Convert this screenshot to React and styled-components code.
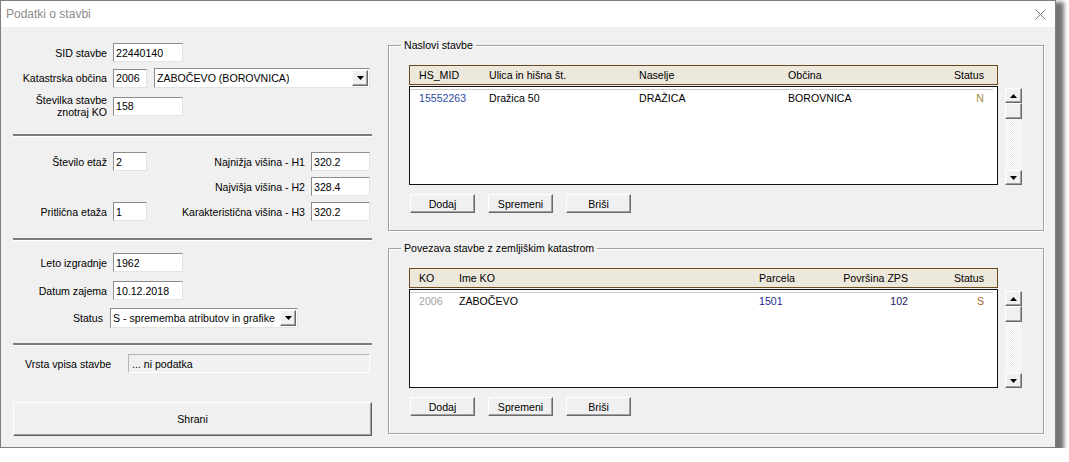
import React from "react";
import styled, { createGlobalStyle } from "styled-components";

const GlobalStyle = createGlobalStyle`
  * { box-sizing: border-box; }
  body {
    margin: 0;
    background: #fff;
    font-family: "Liberation Sans", Arial, sans-serif;
    font-size: 10.6px;
    color: #000;
  }
`;

const addressCols = "70px 150px 149px 120px 1fr";
const parcelCols = "40px 300px 60px 89px 1fr";

function Arrow({ up }) {
  return (
    <svg width="7" height="4" viewBox="0 0 7 4">
      <path d={up ? "M0 4 L7 4 L3.5 0 Z" : "M0 0 L7 0 L3.5 4 Z"} fill="#000" />
    </svg>
  );
}

function Combo({ w, value }) {
  return (
    <ComboBox $w={w}>
      <ComboText>{value}</ComboText>
      <DropButton>
        <Arrow />
      </DropButton>
    </ComboBox>
  );
}

function Scroll() {
  return (
    <ScrollBar>
      <ScrollButton><Arrow up /></ScrollButton>
      <ScrollThumb />
      <ScrollTrack />
      <ScrollButton><Arrow /></ScrollButton>
    </ScrollBar>
  );
}

function App() {
  return (
    <>
      <GlobalStyle />
      <Window>
        <TitleBar>
          <Title>Podatki o stavbi</Title>
          <svg width="11" height="11" viewBox="0 0 11 11">
            <path d="M0.5 0.5 L10.5 10.5 M10.5 0.5 L0.5 10.5" stroke="#7a7a7a" strokeWidth="1" />
          </svg>
        </TitleBar>
        <Body>
          <LeftColumn>
            <FieldRow>
              <Label>SID stavbe</Label>
              <TextBox $w={70} readOnly value="22440140" />
            </FieldRow>
            <FieldRow $mt={6}>
              <Label>Katastrska občina</Label>
              <Inline>
                <TextBox $w={34} readOnly value="2006" />
                <Combo w={216} value="ZABOČEVO (BOROVNICA)" />
              </Inline>
            </FieldRow>
            <FieldRow $mt={6}>
              <Label>Številka stavbe<br />znotraj KO</Label>
              <TextBox $w={70} readOnly value="158" />
            </FieldRow>
            <Separator $mt={16} />

            <HeightsGrid>
              <Label>Število etaž</Label>
              <TextBox readOnly value="2" />
              <Label>Najnižja višina - H1</Label>
              <TextBox readOnly value="320.2" />
              <Label $col={3}>Najvišja višina - H2</Label>
              <TextBox readOnly value="328.4" />
              <Label>Pritlična etaža</Label>
              <TextBox readOnly value="1" />
              <Label>Karakteristična višina - H3</Label>
              <TextBox readOnly value="320.2" />
            </HeightsGrid>
            <Separator $mt={17} />

            <FieldRow $mt={12}>
              <Label>Leto izgradnje</Label>
              <TextBox $w={70} readOnly value="1962" />
            </FieldRow>
            <FieldRow $mt={9}>
              <Label>Datum zajema</Label>
              <TextBox $w={70} readOnly value="10.12.2018" />
            </FieldRow>
            <FieldRow $mt={8}>
              <Label $pr={4}>Status</Label>
              <ShiftLeft>
                <Combo w={188} value="S - sprememba atributov in grafike" />
              </ShiftLeft>
            </FieldRow>
            <Separator $mt={15} />

            <InfoRow>
              <InfoLabel>Vrsta vpisa stavbe</InfoLabel>
              <ReadOnlyBox>... ni podatka</ReadOnlyBox>
            </InfoRow>
            <SaveButton>Shrani</SaveButton>
          </LeftColumn>

          <RightColumn>
            <GroupBox>
              <Legend>Naslovi stavbe</Legend>
              <ListHeader $cols={addressCols}>
                <span>HS_MID</span>
                <span>Ulica in hišna št.</span>
                <span>Naselje</span>
                <span>Občina</span>
                <Cell $align="right">Status</Cell>
              </ListHeader>
              <ListArea>
                <ListBody>
                  <GridLine />
                  <ListRow $cols={addressCols}>
                    <Cell $color="#2a4ba3">15552263</Cell>
                    <Cell>Dražica 50</Cell>
                    <Cell>DRAŽICA</Cell>
                    <Cell>BOROVNICA</Cell>
                    <Cell $align="right" $color="#a8893d">N</Cell>
                  </ListRow>
                </ListBody>
                <Scroll />
              </ListArea>
              <ButtonRow>
                <SmallButton>Dodaj</SmallButton>
                <SmallButton>Spremeni</SmallButton>
                <SmallButton>Briši</SmallButton>
              </ButtonRow>
            </GroupBox>

            <GroupBox $mt={11}>
              <Legend>Povezava stavbe z zemljiškim katastrom</Legend>
              <ListHeader $cols={parcelCols}>
                <span>KO</span>
                <span>Ime KO</span>
                <span>Parcela</span>
                <Cell $align="right">Površina ZPS</Cell>
                <Cell $align="right">Status</Cell>
              </ListHeader>
              <ListArea>
                <ListBody>
                  <GridLine />
                  <ListRow $cols={parcelCols}>
                    <Cell $color="#a3a3a3">2006</Cell>
                    <Cell>ZABOČEVO</Cell>
                    <Cell $color="#1f2c92">1501</Cell>
                    <Cell $align="right" $color="#1b1b5e">102</Cell>
                    <Cell $align="right" $color="#a4622a">S</Cell>
                  </ListRow>
                </ListBody>
                <Scroll />
              </ListArea>
              <ButtonRow>
                <SmallButton>Dodaj</SmallButton>
                <SmallButton>Spremeni</SmallButton>
                <SmallButton>Briši</SmallButton>
              </ButtonRow>
            </GroupBox>
          </RightColumn>
        </Body>
      </Window>
    </>
  );
}

export default App;

const Window = styled.div`
  width: 1056px;
  height: 448px;
  border: 1px solid #7e7e7e;
  background: #f0f0f0;
  display: flex;
  flex-direction: column;
  box-shadow: 5px 5px 4px 3px rgba(0, 0, 0, 0.55);
`;

const TitleBar = styled.div`
  height: 26px;
  flex: none;
  background: #fff;
  display: flex;
  align-items: center;
  justify-content: space-between;
  padding: 0 9px 0 5px;
`;

const Title = styled.div`
  font-size: 12px;
  color: #8c8c8c;
`;

const Body = styled.div`
  flex: 1;
  display: grid;
  grid-template-columns: 359px 656px;
  column-gap: 16px;
  padding-left: 12px;
  align-items: start;
`;

const LeftColumn = styled.div`
  display: flex;
  flex-direction: column;
  padding-top: 16px;
`;

const RightColumn = styled.div`
  display: flex;
  flex-direction: column;
  padding-top: 12px;
`;

const FieldRow = styled.div`
  display: grid;
  grid-template-columns: 94px auto;
  column-gap: 6px;
  align-items: center;
  justify-items: start;
  margin-top: ${p => p.$mt || 0}px;
`;

const Label = styled.div`
  justify-self: end;
  text-align: right;
  white-space: nowrap;
  line-height: 12px;
  padding-right: ${p => p.$pr || 0}px;
  grid-column: ${p => p.$col || "auto"};
`;

const Inline = styled.div`
  display: flex;
  gap: 7px;
  align-items: center;
`;

const ShiftLeft = styled.div`
  margin-left: -3px;
`;

const TextBox = styled.input`
  width: ${p => (p.$w ? `${p.$w}px` : "100%")};
  height: 19px;
  margin: 0;
  padding: 0 2px;
  font: inherit;
  color: #000;
  background: #fff;
  border: 1px solid;
  border-color: #8c8c8c #e3e3e3 #e3e3e3 #8c8c8c;
  outline: none;
`;

const ComboBox = styled.div`
  width: ${p => p.$w}px;
  height: 20px;
  background: #fff;
  border: 1px solid;
  border-color: #8c8c8c #e3e3e3 #e3e3e3 #8c8c8c;
  display: flex;
  align-items: center;
  justify-content: space-between;
  padding: 0 1px 0 2px;
`;

const ComboText = styled.span`
  white-space: nowrap;
  overflow: hidden;
`;

const DropButton = styled.div`
  width: 16px;
  height: 16px;
  flex: none;
  background: #f0f0f0;
  border: 1px solid;
  border-color: #fff #6a6a6a #6a6a6a #fff;
  box-shadow: inset -1px -1px 0 #a0a0a0;
  display: flex;
  align-items: center;
  justify-content: center;
`;

const Separator = styled.div`
  height: 3px;
  flex: none;
  background: #7c7c7c;
  border-bottom: 1px solid #fff;
  margin-top: ${p => p.$mt || 0}px;
`;

const HeightsGrid = styled.div`
  display: grid;
  grid-template-columns: 94px 34px 1fr 59px;
  grid-auto-rows: 19px;
  column-gap: 6px;
  row-gap: 6px;
  align-items: center;
  width: 357px;
  margin-top: 15px;
`;

const InfoRow = styled.div`
  display: flex;
  align-items: center;
  justify-content: space-between;
  margin-top: 8px;
  padding-left: 12px;
  width: 357px;
`;

const InfoLabel = styled.div`
  white-space: nowrap;
`;

const ReadOnlyBox = styled.div`
  width: 242px;
  height: 19px;
  display: flex;
  align-items: center;
  padding-left: 3px;
  background: #f0f0f0;
  border: 1px solid;
  border-color: #b4b4b4 #fff #fff #b4b4b4;
`;

const SaveButton = styled.button`
  margin-top: 29px;
  width: 359px;
  height: 34px;
  font: inherit;
  color: #000;
  background: #f0f0f0;
  border: 1px solid;
  border-color: #fff #5f5f5f #5f5f5f #fff;
  box-shadow: inset -1px -1px 0 #a0a0a0;
  padding: 0;
`;

const GroupBox = styled.fieldset`
  margin: ${p => p.$mt || 0}px 0 0 0;
  width: 656px;
  min-width: 0;
  border: 1px solid #a0a0a0;
  box-shadow: 1px 1px 0 #fff, inset 1px 1px 0 #fff;
  padding: 13px 21px 17px 20px;
`;

const Legend = styled.legend`
  margin-left: -8px;
  padding: 0 3px;
  line-height: 13px;
`;

const ListHeader = styled.div`
  display: grid;
  grid-template-columns: ${p => p.$cols};
  align-items: center;
  width: 589px;
  height: 20px;
  background: #ede8dc;
  border: 1px solid #6c4a20;
  padding: 0 13px 0 9px;
  white-space: nowrap;
`;

const ListArea = styled.div`
  display: flex;
  gap: 7px;
  margin-top: 1px;
`;

const ListBody = styled.div`
  width: 589px;
  height: 99px;
  background: #fff;
  border: 1px solid #111;
  padding-top: 2px;
`;

const GridLine = styled.div`
  height: 1px;
  margin-right: 4px;
  background: #cdcdcd;
`;

const ListRow = styled.div`
  display: grid;
  grid-template-columns: ${p => p.$cols};
  align-items: center;
  height: 16px;
  padding: 0 13px 0 9px;
  white-space: nowrap;
`;

const Cell = styled.span`
  text-align: ${p => p.$align || "left"};
  color: ${p => p.$color || "#000"};
`;

const ScrollBar = styled.div`
  width: 17px;
  height: 97px;
  margin-top: 2px;
  display: flex;
  flex-direction: column;
`;

const ScrollButton = styled.div`
  height: 15px;
  flex: none;
  background: #f0f0f0;
  border: 1px solid;
  border-color: #fff #6a6a6a #6a6a6a #fff;
  box-shadow: inset -1px -1px 0 #a0a0a0;
  display: flex;
  align-items: center;
  justify-content: center;
`;

const ScrollThumb = styled.div`
  height: 16px;
  flex: none;
  background: #f0f0f0;
  border: 1px solid;
  border-color: #fff #6a6a6a #6a6a6a #fff;
  box-shadow: inset -1px -1px 0 #a0a0a0;
`;

const ScrollTrack = styled.div`
  flex: 1;
  background-color: #fafafa;
  background-image: repeating-conic-gradient(#fff 0 25%, #ececec 0 50%);
  background-size: 2px 2px;
`;

const ButtonRow = styled.div`
  display: flex;
  gap: 13px;
  margin-top: 9px;
  padding-left: 1px;
`;

const SmallButton = styled.button`
  width: 65px;
  height: 19px;
  padding: 0;
  font: inherit;
  color: #000;
  background: #f0f0f0;
  border: 1px solid;
  border-color: #fff #6a6a6a #6a6a6a #fff;
  box-shadow: inset -1px -1px 0 #a0a0a0;
`;
